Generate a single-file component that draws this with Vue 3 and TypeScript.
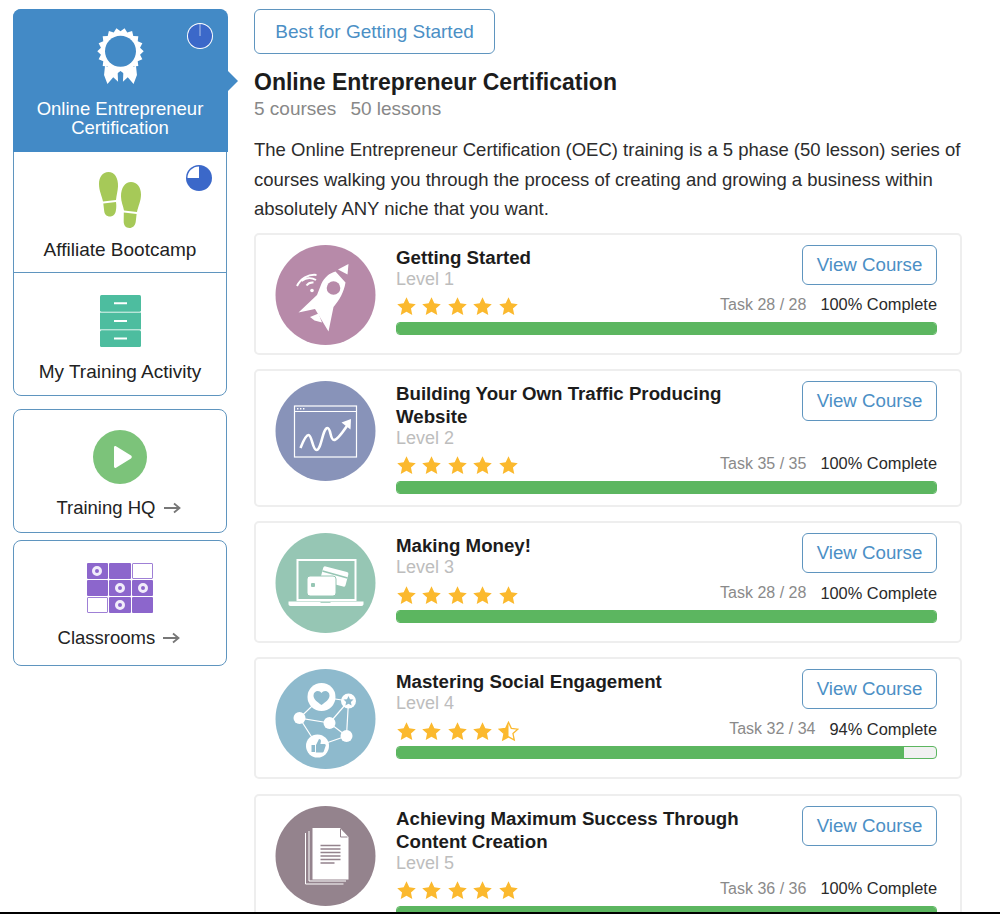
<script setup lang="ts">
interface Course {
  title: string
  level: number
  done: number
  total: number
  pct: number
  color: string
  icon: string
  half?: boolean
}

const courses: Course[] = [
  { title: 'Getting Started', level: 1, done: 28, total: 28, pct: 100, color: '#b78aa9', icon: 'rocket' },
  { title: 'Building Your Own Traffic Producing Website', level: 2, done: 35, total: 35, pct: 100, color: '#8893b9', icon: 'chart' },
  { title: 'Making Money!', level: 3, done: 28, total: 28, pct: 100, color: '#96c6b4', icon: 'laptop' },
  { title: 'Mastering Social Engagement', level: 4, done: 32, total: 34, pct: 94, color: '#8ebacd', icon: 'social', half: true },
  { title: 'Achieving Maximum Success Through Content Creation', level: 5, done: 36, total: 36, pct: 100, color: '#94838d', icon: 'docs' }
]

const starPath = 'M12 1.5l3.2 6.9 7.4.9-5.5 5.1 1.5 7.4L12 18.1l-6.6 3.7 1.5-7.4-5.5-5.1 7.4-.9z'

// scalloped edge of the certificate badge
const sealPoints = Array.from({ length: 36 }, (_, i) => {
  const r = i % 2 === 0 ? 24 : 20.5
  const a = (i / 36) * Math.PI * 2
  return `${(25 + r * Math.cos(a)).toFixed(1)},${(25 + r * Math.sin(a)).toFixed(1)}`
}).join(' ')

const gridCells = [
  'dot', 'fill', 'empty',
  'fill', 'dot', 'dot',
  'empty', 'dot', 'fill'
]
</script>

<template>
  <div class="page">
    <div class="content">
      <aside class="sidebar">
        <nav class="side-box">
          <a class="side-item side-item--active">
            <svg class="pie" viewBox="0 0 26 26">
              <circle cx="13" cy="13" r="13" fill="#fff" />
              <circle cx="13" cy="13" r="12" fill="#3b68c9" />
              <path d="M13 1v12" stroke="#cfdcf2" stroke-width="0.8" />
            </svg>
            <svg class="side-icon seal" viewBox="0 0 50 62">
              <path d="M9 40l13 5.500.5 11-5-4.500-6 7-3.500-9.500z" fill="#fff" />
              <path d="M41 40l-13 5.500-.5 11 5-4.500 6 7 3.500-9.500z" fill="#fff" />
              <polygon :points="sealPoints" fill="#fff" />
              <circle cx="25" cy="25" r="16" fill="#438ac6" />
            </svg>
            <span class="side-label">Online Entrepreneur<br>Certification</span>
            <i class="side-arrow"></i>
          </a>
          <a class="side-item side-item--feet">
            <svg class="pie" viewBox="0 0 26 26">
              <circle cx="13" cy="13" r="13" fill="#3b68c9" />
              <path d="M13 13V1.500A11.500 11.500 0 0 0 1.500 13z" fill="#fff" />
            </svg>
            <svg class="side-icon feet" viewBox="0 0 42 56">
              <path d="M9.500 0C15.500 0 19.500 6 19 14.500c-.3 5-1.500 8.500-2 13.500L4 29.500C3 24 0 19 0 12 0 5 3.500 0 9.500 0z" fill="#a6c958" />
              <path d="M4.300 31.500L17 30c.4 3 .5 5.500-.2 9-.6 3.300-2.800 5.500-5.800 5.500-3.300 0-5.500-2.200-5.800-5.500z" fill="#a6c958" />
              <path d="M32 10c6 0 10 5 10 12.500 0 6.500-2.800 11.500-4 17.500L25 38.500c-.8-5-3-8.500-3-14C22 15.500 26 10 32 10z" fill="#a6c958" />
              <path d="M24.800 40.500L37.600 42l-.9 8c-.6 3.700-3 6-6.300 6-3.500 0-5.800-2.800-5.700-6.500z" fill="#a6c958" />
            </svg>
            <span class="side-label">Affiliate Bootcamp</span>
          </a>
          <a class="side-item side-item--files">
            <svg class="side-icon files" viewBox="0 0 41 52">
              <rect width="41" height="16.800" rx="1.500" fill="#4dbd9f" />
              <rect y="17.600" width="41" height="16.800" fill="#4dbd9f" />
              <rect y="35.200" width="41" height="16.800" rx="1.500" fill="#4dbd9f" />
              <path d="M14 8.200h13M14 26h13M14 43.500h13" stroke="#fff" stroke-width="2" />
            </svg>
            <span class="side-label">My Training Activity</span>
          </a>
        </nav>

        <a class="side-box side-link side-link--play">
          <svg class="side-icon play" viewBox="0 0 54 54">
            <circle cx="27" cy="27" r="27" fill="#7cc37a" />
            <path d="M21 17.500c0-1.300 1-1.800 2-1.200l15 9.300c1 .6 1 2.200 0 2.800l-15 9.300c-1 .6-2-.1-2-1.200z" fill="#fff" />
          </svg>
          <span class="side-label">Training HQ
            <svg class="go" viewBox="0 0 17 12"><path d="M0 6h15M10 1.500L15.500 6 10 10.500" fill="none" stroke="#777" stroke-width="1.800" /></svg>
          </span>
        </a>

        <a class="side-box side-link side-link--grid">
          <div class="side-icon grid">
            <span v-for="(cell, i) in gridCells" :key="i" class="cell" :class="`cell--${cell}`"></span>
          </div>
          <span class="side-label">Classrooms
            <svg class="go" viewBox="0 0 17 12"><path d="M0 6h15M10 1.500L15.500 6 10 10.500" fill="none" stroke="#777" stroke-width="1.800" /></svg>
          </span>
        </a>
      </aside>

      <main class="main">
        <button class="tag">Best for Getting Started</button>
        <h1 class="heading">Online Entrepreneur Certification</h1>
        <p class="counts"><span>5 courses</span><span>50 lessons</span></p>
        <p class="intro">The Online Entrepreneur Certification (OEC) training is a 5 phase (50 lesson) series of courses walking you through the process of creating and growing a business within absolutely ANY niche that you want.</p>

        <div class="course-list">
          <article v-for="course in courses" :key="course.level" class="course">
            <svg class="thumb" viewBox="0 0 100 100">
              <circle cx="50" cy="50" r="50" :fill="course.color" />

              <g v-if="course.icon === 'rocket'">
                <path d="M62.500 24.500l10.500-5.500-1 10.500z" fill="#fff" />
                <path d="M60 26.500c-6 1.500-11 6-14 12l-4.500 11.500L23 67.500l16.500-3.500 13.500 22.500 5-24.500c6-7 10.500-15 12-24.500z" fill="#fff" />
                <circle cx="58" cy="43" r="6.800" :fill="course.color" />
                <path d="M34.500 72l8.500-3.500 3.500 9-7.500-2z" fill="#fff" />
                <g fill="none" stroke="#fff" stroke-width="2">
                  <path d="M31 40.500a7.500 7.500 0 0 1 7-3" />
                  <path d="M26 36a12.500 12.500 0 0 1 14.500-1" />
                  <path d="M21.500 41a19 19 0 0 1 19.500-11" />
                </g>
                <circle cx="36.500" cy="45.500" r="1.800" fill="#fff" />
              </g>

              <g v-else-if="course.icon === 'chart'">
                <rect x="19" y="25" width="62" height="51" fill="none" stroke="#fff" stroke-width="1.200" />
                <path d="M19 30.500h62" stroke="#fff" stroke-width="1.200" />
                <path d="M21.500 27.700h1.400M24.500 27.700h1.400M27.500 27.700h1.400" stroke="#fff" stroke-width="1.400" />
                <path d="M25 67c2-5 5-13 8-13 3.500 0 4 15 8 15 5 0 6-22 11-22 3.500 0 2.500 12 6.500 12 4 0 10-10 15-17" fill="none" stroke="#fff" stroke-width="2.600" />
                <path d="M66 41.500l9.500-3.500-.5 10.500z" fill="#fff" />
              </g>

              <g v-else-if="course.icon === 'laptop'">
                <rect x="22" y="27" width="58" height="40" fill="none" stroke="#fff" stroke-width="2" />
                <path d="M13 68.500h75v2.500c0 1-.8 2-2 2H15c-1.200 0-2-1-2-2z" fill="#fff" />
                <path d="M45 69.500h10" :stroke="course.color" stroke-width="0.800" />
                <rect x="46" y="36" width="26" height="15" rx="2" transform="rotate(15 59 43)" fill="#fff" />
                <path d="M47 38l25 7" :stroke="course.color" stroke-width="1.800" />
                <rect x="31.500" y="43" width="29" height="20" rx="3" fill="#fff" stroke="#96c6b4" stroke-width="1" />
                <rect x="35.500" y="50" width="4" height="4" rx="1" :fill="course.color" />
              </g>

              <g v-else-if="course.icon === 'social'">
                <path d="M46 28L73 32 71 67 54 54 24 49 46 28M24 49l18 28 29-10M73 32L54 54" fill="none" stroke="#fff" stroke-width="1.200" />
                <circle cx="46" cy="28" r="14" fill="#fff" />
                <path d="M46 36c-4-3-8-5.500-8-9.500 0-5 6-6 8-2.500 2-3.500 8-2.500 8 2.500 0 4-4 6.500-8 9.500z" :fill="course.color" />
                <circle cx="73" cy="32" r="7.500" fill="#fff" />
                <path d="M73 27l1.500 3.200 3.500.4-2.600 2.400.7 3.500-3.100-1.700-3.100 1.700.7-3.500-2.600-2.400 3.500-.4z" :fill="course.color" />
                <circle cx="24" cy="49" r="6" fill="#fff" />
                <circle cx="54" cy="54" r="6" fill="#fff" />
                <circle cx="71" cy="67" r="6" fill="#fff" />
                <circle cx="42" cy="77" r="11.500" fill="#fff" />
                <path d="M36 76h3.500v7H36zM40.500 76l3-6c1.500 0 2.200 1.200 1.800 3l-.4 2h4c1.500 0 1.700 1.500 1 2.500l-1.500 4.500c-.3 1-1 1.500-2 1.500h-6z" :fill="course.color" />
              </g>

              <g v-else-if="course.icon === 'docs'">
                <path d="M30 27v51h38" fill="none" stroke="#fff" stroke-width="1" />
                <path d="M33.500 25v50h37" fill="none" stroke="#fff" stroke-width="1" />
                <path d="M37 22h27.500l8.500 9v42.500H37z" fill="#fff" />
                <path d="M65 23v8h7" fill="none" :stroke="course.color" stroke-width="1" />
                <path d="M45 39.500h20M45 43h20M45 46.500h20M45 50h20M45 53.500h20M45 57h14" :stroke="course.color" stroke-width="1.300" />
              </g>
            </svg>

            <div class="course-body">
              <div class="course-top">
                <div class="course-name">
                  <h2 class="course-title">{{ course.title }}</h2>
                  <div class="course-level">Level {{ course.level }}</div>
                </div>
                <button class="view-btn">View Course</button>
              </div>
              <div class="course-meta">
                <div class="stars">
                  <svg v-for="n in 5" :key="n" class="star" viewBox="0 0 24 24">
                    <template v-if="course.half && n === 5">
                      <path :d="starPath" fill="none" stroke="#fbb92e" stroke-width="1.500" />
                      <path d="M12 1.500v16.600l-6.600 3.700 1.500-7.400-5.500-5.100 7.400-.9z" fill="#fbb92e" />
                    </template>
                    <path v-else :d="starPath" fill="#fbb92e" />
                  </svg>
                </div>
                <span class="task">Task {{ course.done }} / {{ course.total }}</span>
                <span class="complete">{{ course.pct }}% Complete</span>
              </div>
              <div class="bar">
                <div class="bar-fill" :style="{ width: course.pct + '%' }"></div>
              </div>
            </div>
          </article>
        </div>
      </main>
    </div>
    <div class="edge"></div>
  </div>
</template>

<style scoped>
.page {
  height: 914px;
  display: flex;
  flex-direction: column;
  overflow: hidden;
  background: #fff;
  font-family: "Liberation Sans", Arial, sans-serif;
  color: #222;
}

.content {
  flex: 1;
  min-height: 0;
  overflow: hidden;
  display: flex;
  align-items: flex-start;
  gap: 27px;
  padding: 9px 0 0 13px;
}

.edge {
  height: 2px;
  background: #000;
}

.sidebar {
  width: 214px;
  flex: none;
  display: flex;
  flex-direction: column;
  gap: 13px;
}

.side-box {
  display: block;
  border: 1.5px solid #5f95bf;
  border-radius: 8px;
  background: #fff;
}

.side-item {
  position: relative;
  display: flex;
  flex-direction: column;
  align-items: center;
  text-align: center;
  border-bottom: 1.5px solid #5f95bf;
}

.side-item:last-child {
  border-bottom: none;
  border-radius: 0 0 8px 8px;
}

.side-item--active {
  height: 143px;
  padding-top: 18px;
  box-sizing: border-box;
  margin: -1.500px -1.500px 0;
  background: #438ac6;
  border-radius: 8px 8px 0 0;
  border-bottom: none;
  color: #fff;
}

.side-item--feet {
  height: 121px;
  padding-top: 20px;
  box-sizing: border-box;
}

.side-item--files {
  height: 122px;
  padding-top: 22px;
  box-sizing: border-box;
}

.side-arrow {
  position: absolute;
  right: -10px;
  top: 62px;
  width: 0;
  height: 0;
  border-style: solid;
  border-width: 10px 0 10px 10px;
  border-color: transparent transparent transparent #438ac6;
}

.pie {
  position: absolute;
  top: 14px;
  right: 15px;
  width: 26px;
  height: 26px;
}

.side-item--feet .pie {
  top: 13px;
  right: 14px;
}

.side-icon {
  display: block;
  flex: none;
}

.seal {
  width: 49px;
  height: 60px;
}

.feet {
  width: 42px;
  height: 56px;
}

.files {
  width: 41px;
  height: 52px;
}

.side-label {
  font-size: 18.500px;
  line-height: 19px;
  white-space: nowrap;
}

.side-item--active .side-label {
  margin-top: 12px;
}

.side-item--feet .side-label {
  margin-top: 12px;
  font-size: 19px;
}

.side-item--files .side-label {
  margin-top: 15px;
  font-size: 19px;
}

.side-link {
  display: flex;
  flex-direction: column;
  align-items: center;
}

.side-link--play {
  height: 124px;
  box-sizing: border-box;
  padding-top: 20px;
}

.side-link--play + .side-link--grid {
  margin-top: -6px;
}

.side-link--grid {
  height: 126px;
  box-sizing: border-box;
  padding-top: 22px;
}

.play {
  width: 54px;
  height: 54px;
}

.side-link .side-label {
  margin: 14px 3px 0 0;
  color: #222;
}

.side-link--grid .side-label {
  margin: 15px 2px 0 0;
}

.go {
  width: 17px;
  height: 12px;
  margin-left: 3px;
}

.grid {
  display: grid;
  grid-template-columns: repeat(3, 21.500px);
  grid-auto-rows: 16px;
  gap: 1.200px;
}

.cell {
  display: flex;
  align-items: center;
  justify-content: center;
  box-sizing: border-box;
  border-radius: 1px;
  background: #8c66cc;
}

.cell--empty {
  background: #fff;
  border: 1.500px solid #9f80d6;
}

.cell--dot::after {
  content: "";
  width: 4px;
  height: 4px;
  border-radius: 50%;
  border: 3px solid #f1ecfa;
  box-sizing: content-box;
}

.main {
  width: 708px;
  flex: none;
}

.tag,
.view-btn {
  display: block;
  font-family: inherit;
  background: #fff;
  color: #4b8fc5;
  border: 1.500px solid #5f95bf;
  border-radius: 6px;
  cursor: pointer;
}

.tag {
  width: 241px;
  height: 45px;
  font-size: 19px;
}

.heading {
  margin: 14px 0 0;
  font-size: 23px;
  line-height: 28px;
  font-weight: 700;
  color: #1c1c1c;
}

.counts {
  display: flex;
  gap: 14px;
  margin: 1px 0 0;
  font-size: 19px;
  line-height: 24px;
  color: #888;
}

.intro {
  margin: 14px 0 0;
  font-size: 18.500px;
  line-height: 29.500px;
  color: #2c2c2c;
}

.course-list {
  display: flex;
  flex-direction: column;
  gap: 14.250px;
  margin-top: 9px;
}

.course {
  display: flex;
  align-items: flex-start;
  gap: 20px;
  box-sizing: border-box;
  padding: 10px 23px 8px 19px;
  border: 2px solid #eee;
  border-radius: 5px;
  background: #fff;
}

.thumb {
  display: block;
  flex: none;
  width: 101px;
  height: 100px;
}

.course-body {
  flex: 1;
  min-width: 0;
}

.course-top {
  display: flex;
  justify-content: space-between;
  align-items: flex-start;
  gap: 30px;
}

.course-name {
  padding-top: 1px;
}

.course-title {
  margin: 0;
  font-size: 18.700px;
  line-height: 23px;
  font-weight: 700;
  color: #1c1c1c;
}

.course-level {
  font-size: 18px;
  line-height: 20px;
  color: #bdbdbd;
}

.view-btn {
  flex: none;
  width: 135px;
  height: 40px;
  font-size: 18.700px;
}

.course-meta {
  display: flex;
  align-items: center;
  height: 22px;
  margin-top: 7px;
  font-size: 16px;
}

.stars {
  display: flex;
  gap: 4.400px;
  margin-right: auto;
}

.star {
  display: block;
  width: 21px;
  height: 21px;
}

.task {
  color: #8a8a8a;
  margin: 0 14px 4px 0;
}

.complete {
  font-size: 16.400px;
  margin-bottom: 4px;
  color: #2a2a2a;
}

.bar {
  height: 13px;
  margin: 4px 0 3px;
  box-sizing: border-box;
  border: 1px solid #5cb660;
  border-radius: 4px;
  background: #f1f1f1;
  overflow: hidden;
}

.bar-fill {
  height: 100%;
  background: #5cb660;
}
</style>

<style>
html,
body {
  margin: 0;
  background: #fff;
}
</style>
